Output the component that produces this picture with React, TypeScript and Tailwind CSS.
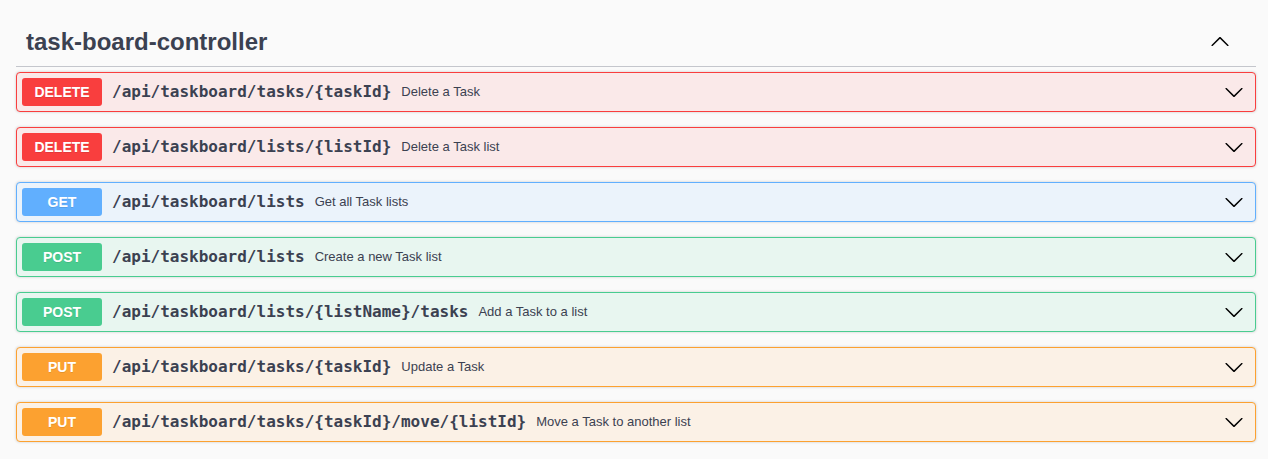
import React from "react";

type Op = { method: "DELETE" | "GET" | "POST" | "PUT"; path: string; desc: string };

const ops: Op[] = [
  { method: "DELETE", path: "/api/taskboard/tasks/{taskId}", desc: "Delete a Task" },
  { method: "DELETE", path: "/api/taskboard/lists/{listId}", desc: "Delete a Task list" },
  { method: "GET", path: "/api/taskboard/lists", desc: "Get all Task lists" },
  { method: "POST", path: "/api/taskboard/lists", desc: "Create a new Task list" },
  { method: "POST", path: "/api/taskboard/lists/{listName}/tasks", desc: "Add a Task to a list" },
  { method: "PUT", path: "/api/taskboard/tasks/{taskId}", desc: "Update a Task" },
  { method: "PUT", path: "/api/taskboard/tasks/{taskId}/move/{listId}", desc: "Move a Task to another list" },
];

const styles: Record<Op["method"], { row: string; badge: string }> = {
  DELETE: { row: "border-[#f93e3e] bg-[#fae9e9]", badge: "bg-[#f93e3e]" },
  GET: { row: "border-[#61affe] bg-[#ebf3fb]", badge: "bg-[#61affe]" },
  POST: { row: "border-[#49cc90] bg-[#e8f6f0]", badge: "bg-[#49cc90]" },
  PUT: { row: "border-[#fca130] bg-[#fbf1e6]", badge: "bg-[#fca130]" },
};

const Arrow = ({ up = false }: { up?: boolean }) => (
  <svg
    viewBox="0 0 20 20"
    width="20"
    height="20"
    className={up ? "rotate-180" : ""}
    fill="#000"
  >
    <path d="M17.418 6.109c.272-.268.709-.268.979 0s.271.701 0 .969l-7.908 7.83c-.27.268-.707.268-.979 0l-7.908-7.83c-.27-.268-.27-.701 0-.969.271-.268.709-.268.979 0L10 13.25l7.418-7.141z" />
  </svg>
);

export default function App() {
  return (
    <div className="min-h-[459px] bg-[#fafafa] pl-[16px] pr-[12px] pt-[17px] text-[#3b4151]">
      <div className="flex h-[50px] items-center justify-between border-b border-[#c4c6cc] pl-[10px] pr-[26px] mb-[5px]">
        <h3 className="text-[24px] font-bold text-[#3b4151]" style={{ fontFamily: "'Liberation Sans', Arial, sans-serif" }}>
          task-board-controller
        </h3>
        <Arrow up />
      </div>
      <div className="flex flex-col gap-[15px]">
        {ops.map((op, i) => (
          <div
            key={i}
            className={`flex h-[40px] items-center rounded-[4px] border p-[5px] shadow-[0_0_3px_rgba(0,0,0,0.19)] ${styles[op.method].row}`}
          >
            <span
              className={`flex h-[28px] w-[80px] shrink-0 items-center justify-center rounded-[3px] text-[14px] font-bold text-white [text-shadow:0_1px_0_rgba(0,0,0,0.1)] ${styles[op.method].badge}`}
              style={{ fontFamily: "'Liberation Sans', Arial, sans-serif" }}
            >
              {op.method}
            </span>
            <span
              className="px-[10px] text-[16px] font-bold text-[#3b4151]"
              style={{ fontFamily: "'DejaVu Sans Mono', monospace" }}
            >
              {op.path}
            </span>
            <span
              className="flex-1 text-[13px] text-[#3b4151]"
              style={{ fontFamily: "'Liberation Sans', Arial, sans-serif" }}
            >
              {op.desc}
            </span>
            <span className="mr-[6px] flex items-center">
              <Arrow />
            </span>
          </div>
        ))}
      </div>
    </div>
  );
}
